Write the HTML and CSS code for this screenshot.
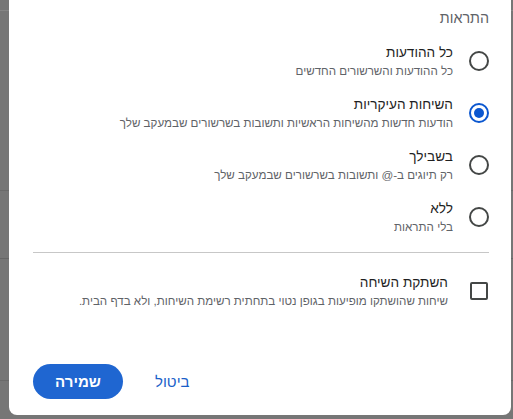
FILE: index.html
```html
<!DOCTYPE html>
<html lang="he" dir="rtl">
<head>
<meta charset="utf-8">
<title>התראות</title>
<link rel="stylesheet" href="styles.css">
</head>
<body>
<div class="backdrop">
  <div class="dialog">
    <div class="heading">התראות</div>
    <div class="options">
      <label class="row">
        <span class="radio"></span>
        <span class="text">
          <span class="title">כל ההודעות</span>
          <span class="sub">כל ההודעות והשרשורים החדשים</span>
        </span>
      </label>
      <label class="row">
        <span class="radio checked"></span>
        <span class="text">
          <span class="title">השיחות העיקריות</span>
          <span class="sub">הודעות חדשות מהשיחות הראשיות ותשובות בשרשורים שבמעקב שלך</span>
        </span>
      </label>
      <label class="row">
        <span class="radio"></span>
        <span class="text">
          <span class="title">בשבילך</span>
          <span class="sub">רק תיוגים ב-@ ותשובות בשרשורים שבמעקב שלך</span>
        </span>
      </label>
      <label class="row">
        <span class="radio"></span>
        <span class="text">
          <span class="title">ללא</span>
          <span class="sub">בלי התראות</span>
        </span>
      </label>
    </div>
    <div class="divider"></div>
    <label class="row check-row">
      <span class="box-wrap"><span class="checkbox"></span></span>
      <span class="text">
        <span class="title">השתקת השיחה</span>
        <span class="sub">שיחות שהושתקו מופיעות בגופן נטוי בתחתית רשימת השיחות, ולא בדף הבית.</span>
      </span>
    </label>
    <div class="footer">
      <button class="btn-text">ביטול</button>
      <button class="btn-primary">שמירה</button>
    </div>
  </div>
</div>
</body>
</html>
```
FILE: styles.css
```css
* { box-sizing: border-box; }
html, body { margin: 0; padding: 0; }
body {
  width: 513px;
  height: 419px;
  overflow: hidden;
  font-family: "Liberation Sans", Arial, sans-serif;
  background-color: #767676;
  background-image:
    linear-gradient(#858585, #858585),
    linear-gradient(#6a6a6a, #6a6a6a),
    linear-gradient(#666666, #666666),
    linear-gradient(#6a6a6a, #6a6a6a);
  background-size: 100% 1px, 100% 1px, 100% 1px, 100% 1px;
  background-position: 0 10px, 0 190px, 0 258px, 0 380px;
  background-repeat: no-repeat;
}
.backdrop {
  height: 419px;
  padding: 0 2px 4px 9px;
  display: flex;
}
.dialog {
  flex: 1;
  background: #ffffff;
  border-radius: 0 0 8px 8px;
  padding: 8px 22px 16px 24px;
  display: flex;
  flex-direction: column;
}
.heading {
  font-size: 14.3px;
  line-height: 20px;
  color: #5f6368;
}
.options {
  margin-top: 7px;
  display: flex;
  flex-direction: column;
}
.row {
  display: flex;
  align-items: center;
  gap: 16px;
  padding: 8px 0;
  height: 52px;
}
.radio {
  flex: none;
  width: 20px;
  height: 20px;
  border: 2px solid #444746;
  border-radius: 50%;
  display: flex;
  align-items: center;
  justify-content: center;
}
.radio.checked {
  border-color: #0b57d0;
}
.radio.checked::after {
  content: "";
  width: 10px;
  height: 10px;
  border-radius: 50%;
  background: #0b57d0;
}
.text {
  display: flex;
  flex-direction: column;
}
.title {
  font-size: 13.6px;
  line-height: 20px;
  color: #1f1f1f;
}
.sub {
  font-size: 11.6px;
  line-height: 16px;
  color: #5f6368;
}
.divider {
  margin-top: 9px;
  height: 1px;
  background: #c7c7c7;
}
.check-row {
  margin-top: 12px;
  gap: 21px;
}
.box-wrap {
  flex: none;
  width: 20px;
  height: 20px;
  display: flex;
  align-items: center;
  justify-content: center;
}
.checkbox {
  width: 18px;
  height: 18px;
  border: 2px solid #444746;
  border-radius: 2px;
}
.footer {
  margin-top: auto;
  display: flex;
  align-items: center;
  gap: 20px;
}
.footer button {
  font-family: "Liberation Sans", Arial, sans-serif;
  font-size: 15px;
  border: none;
  cursor: pointer;
}
.btn-text {
  background: transparent;
  color: #1a5fc9;
  height: 35px;
  padding: 0 12px;
  margin-right: auto;
}
.btn-primary {
  width: 90px;
  height: 35px;
  border-radius: 18px;
  background: #1f66d1;
  color: #ffffff;
  font-weight: bold;
}
```
